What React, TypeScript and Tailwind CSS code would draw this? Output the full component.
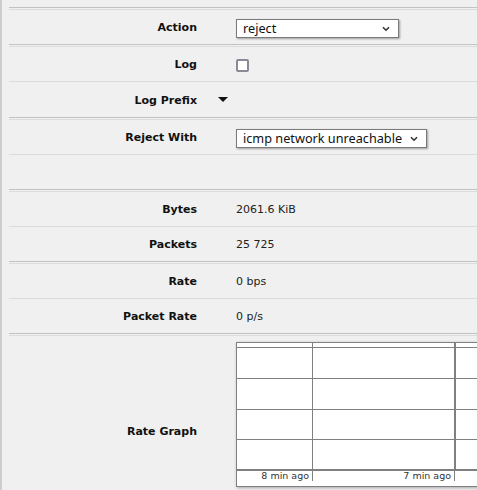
import React from "react";

const Chevron = () => (
  <svg width="8" height="6" viewBox="0 0 8 6" className="shrink-0">
    <polyline points="1,1.2 4,4.2 7,1.2" fill="none" stroke="#333" strokeWidth="1.6" />
  </svg>
);

const Select = ({ value, w }: { value: string; w: string }) => (
  <div
    className={`${w} h-[19px] flex items-center justify-between bg-white border border-[#7a7a7a] pl-[6px] pr-[8px] shadow-[1px_1px_2px_rgba(0,0,0,0.35)] text-[12.7px] text-[#111] font-['Noto_Sans',sans-serif] leading-none`}
  >
    <span className="-mt-px">{value}</span>
    <Chevron />
  </div>
);

const Row = ({
  label,
  children,
  h = "h-[35px]",
  mid,
}: {
  label: string;
  children?: React.ReactNode;
  h?: string;
  mid?: React.ReactNode;
}) => (
  <div className={`flex items-center ${h} border-t border-[#dcdcdc]`}>
    <div className="w-[188px] shrink-0 pt-[3px] text-right font-bold text-[#111]">{label}</div>
    <div className="w-[39px] shrink-0 flex items-center">{mid}</div>
    <div className="flex items-center pt-[3px] text-[#222]">{children}</div>
  </div>
);

const Group = ({ children }: { children: React.ReactNode }) => (
  <div className="border-t border-[#c2c2c2] pt-px">{children}</div>
);

const Graph = () => {
  const W = 260;
  const H = 145;
  const g = "#808080";
  return (
    <div className="w-[260px] h-[145px] shrink-0 shadow-[1px_1px_3px_rgba(0,0,0,0.3)] bg-white">
      <svg width={W} height={H} viewBox={`0 0 ${W} ${H}`} className="block">
        <rect x="0" y="0" width={W} height={H} fill="#fff" />
        <rect x="0.5" y="0.5" width={W + 5} height={H - 1} fill="none" stroke={g} strokeWidth="1" />
        <line x1="0" y1="5.5" x2={W} y2="5.5" stroke={g} strokeWidth="1" />
        <line x1="0" y1="36.5" x2={W} y2="36.5" stroke={g} strokeWidth="1" />
        <line x1="0" y1="67.5" x2={W} y2="67.5" stroke={g} strokeWidth="1" />
        <line x1="0" y1="97.5" x2={W} y2="97.5" stroke={g} strokeWidth="1" />
        <rect x="0" y="127" width={W} height="2" fill={g} />
        <line x1="76.5" y1="0" x2="76.5" y2="139" stroke={g} strokeWidth="1" />
        <rect x="218" y="0" width="2" height="129" fill={g} />
        <line x1="218.5" y1="129" x2="218.5" y2="139" stroke={g} strokeWidth="1" />
        <text x="73" y="137" textAnchor="end" fontSize="9.5" fill="#333" fontFamily="'DejaVu Sans', sans-serif">
          8 min ago
        </text>
        <text x="215" y="137" textAnchor="end" fontSize="9.5" fill="#333" fontFamily="'DejaVu Sans', sans-serif">
          7 min ago
        </text>
      </svg>
    </div>
  );
};

export default function App() {
  return (
    <div className="w-[477px] h-[490px] overflow-hidden bg-[#f0f0f0] border-l-2 border-[#cdcdcd] font-['DejaVu_Sans',sans-serif] text-[11px]">
      <div className="pl-[7px] pt-[7px] w-[560px]">
        <Group>
          <Row label="Action">
            <Select value="reject" w="w-[163px]" />
          </Row>
        </Group>
        <Group>
          <Row label="Log">
            <div className="w-[13px] h-[13px] border-2 border-[#8b8996] rounded-[2px] bg-white" />
          </Row>
          <Row
            label="Log Prefix"
            h="h-[36px]"
            mid={
              <svg width="10" height="5" viewBox="0 0 10 5" className="ml-[21px]">
                <polygon points="0,0 10,0 5,5" fill="#111" />
              </svg>
            }
          />
        </Group>
        <Group>
          <Row label="Reject With">
            <Select value="icmp network unreachable" w="w-[191px]" />
          </Row>
          <Row label="" />
        </Group>
        <Group>
          <Row label="Bytes">2061.6 KiB</Row>
          <Row label="Packets">25 725</Row>
        </Group>
        <Group>
          <Row label="Rate">0 bps</Row>
          <Row label="Packet Rate">0 p/s</Row>
        </Group>
        <Group>
          <div className="flex h-[191px] border-t border-[#dcdcdc]">
            <div className="w-[188px] shrink-0 self-center pt-[3px] text-right font-bold text-[#111]">Rate Graph</div>
            <div className="w-[39px] shrink-0" />
            <div className="pt-[6px]">
              <Graph />
            </div>
          </div>
        </Group>
      </div>
    </div>
  );
}
